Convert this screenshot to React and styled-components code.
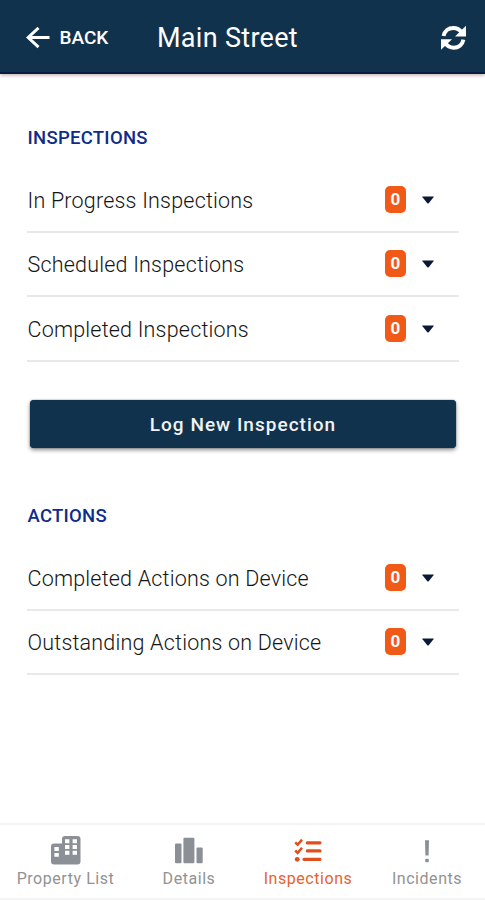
import styled, { createGlobalStyle } from "styled-components";

const inspections = [
  { label: "In Progress Inspections", count: 0 },
  { label: "Scheduled Inspections", count: 0 },
  { label: "Completed Inspections", count: 0 },
];

const actions = [
  { label: "Completed Actions on Device", count: 0 },
  { label: "Outstanding Actions on Device", count: 0 },
];

function List({ items }) {
  return (
    <Rows>
      {items.map((item) => (
        <Row key={item.label}>
          <RowLabel>{item.label}</RowLabel>
          <Badge>{item.count}</Badge>
          <Caret width="12" height="8" viewBox="0 0 12 8">
            <path d="M0.6 0.4H11.4Q12 0.6 11.5 1.3L6.7 7.2Q6 8 5.3 7.2L0.5 1.3Q0 0.6 0.6 0.4Z" />
          </Caret>
        </Row>
      ))}
    </Rows>
  );
}

export default function App() {
  return (
    <Page>
      <GlobalStyle />
      <Header>
        <BackButton>
          <svg width="24" height="22" viewBox="0 0 24 22" fill="none" stroke="#fff" strokeWidth="3">
            <path d="M23.5 10.5H2.5M12.5 0.9L2.2 10.5L12.5 20.1" />
          </svg>
          BACK
        </BackButton>
        <Title>Main Street</Title>
        <RefreshButton>
          <svg width="27" height="26" viewBox="0 0 27 26">
            <path d="M3.6 11C4.6 5.7 8.6 2.9 13.3 2.9C17 2.9 19.8 4.6 21.8 7.4" fill="none" stroke="#fff" strokeWidth="4" />
            <path d="M26 0.8V11.4H15Z" fill="#fff" />
            <path d="M23.4 14.6C22.4 19.9 18.4 22.7 13.7 22.7C10 22.7 7.2 21 5.2 18.2" fill="none" stroke="#fff" strokeWidth="4" />
            <path d="M1 24.8V14.2H12Z" fill="#fff" />
          </svg>
        </RefreshButton>
      </Header>

      <Content>
        <SectionTitle>INSPECTIONS</SectionTitle>
        <List items={inspections} />
        <LogButton>Log New Inspection</LogButton>
        <SectionTitle>ACTIONS</SectionTitle>
        <List items={actions} />
      </Content>

      <TabBar>
        <Tab $width="131px">
          <svg width="30" height="30" viewBox="0 0 30 30">
            <path d="M3 8.5H11V4Q11 1 14 1H26.5Q29.5 1 29.5 4V26.5Q29.5 29.5 26.5 29.5H3Q0 29.5 0 26.5V11.5Q0 8.5 3 8.5Z" fill="currentColor" />
            <path
              d="M3.4 12H7.8V16H3.4ZM3.4 18H7.8V21.8H3.4ZM14 4.2H18.4V8.2H14ZM21.6 4.2H26V8.2H21.6ZM14 10H18.4V14H14ZM21.6 10H26V14H21.6ZM14 15.7H18.4V19.7H14ZM21.6 15.7H26V19.7H21.6Z"
              fill="#fff"
            />
          </svg>
          <TabLabel>Property List</TabLabel>
        </Tab>
        <Tab $width="116px">
          <svg width="28" height="30" viewBox="0 0 28 30" fill="currentColor">
            <rect x="0" y="8.5" width="6.5" height="19.8" rx="1" />
            <rect x="8.4" y="2.7" width="11" height="25.6" rx="1" />
            <rect x="21.5" y="12.4" width="6.2" height="15.9" rx="1" />
          </svg>
          <TabLabel>Details</TabLabel>
        </Tab>
        <Tab $width="122px" $active>
          <svg width="28" height="30" viewBox="0 0 28 30" fill="none" stroke="currentColor">
            <path d="M13.3 7.8H26M13.3 15.9H26M10 24.3H26" strokeWidth="3.2" strokeLinecap="round" />
            <path d="M1.2 7.3L3.7 9.7L8 4.6M1.2 15.5L3.7 17.9L8 12.8" strokeWidth="2.5" />
            <circle cx="3.2" cy="24.3" r="2.4" fill="currentColor" stroke="none" />
          </svg>
          <TabLabel $active>Inspections</TabLabel>
        </Tab>
        <Tab $width="116px">
          <svg width="6" height="30" viewBox="0 0 6 30" fill="currentColor">
            <path d="M1 5.2H5L4.6 20.5H1.4Z" />
            <rect x="1.2" y="23.8" width="3.6" height="3.4" rx="1" />
          </svg>
          <TabLabel>Incidents</TabLabel>
        </Tab>
      </TabBar>
    </Page>
  );
}

const GlobalStyle = createGlobalStyle`
  * {
    box-sizing: border-box;
  }

  body {
    margin: 0;
    background-color: #fff;
    font-family: Roboto, "Liberation Sans", sans-serif;
  }

  button {
    border: none;
    padding: 0;
    background: none;
    color: inherit;
    font-family: inherit;
  }

  svg {
    display: block;
    flex-shrink: 0;
  }
`;

const Page = styled.div`
  display: flex;
  flex-direction: column;
  width: 485px;
  height: 900px;
  background-color: #fff;
`;

const Header = styled.header`
  display: flex;
  align-items: center;
  height: 74px;
  padding: 0 18px 0 26px;
  background-color: #11324d;
  border-bottom: 2px solid #071c42;
  box-shadow: 0 1px 4px rgba(60, 30, 20, 0.4);
  color: #fff;
`;

const BackButton = styled.button`
  display: flex;
  align-items: center;
  gap: 9.5px;
  width: 131px;
  padding-top: 3px;
  font-size: 19px;
  font-weight: 500;
  letter-spacing: 0;
`;

const Title = styled.h1`
  flex: 1;
  margin: 0;
  padding-top: 3px;
  font-size: 27px;
  font-weight: 400;
  letter-spacing: 0.3px;
`;

const RefreshButton = styled.button`
  padding-top: 3px;
`;

const Content = styled.main`
  flex: 1;
  padding: 52px 26px 0 27px;
`;

const SectionTitle = styled.h2`
  margin: 0;
  height: 24px;
  padding-left: 0.5px;
  line-height: 24px;
  color: #102c8a;
  font-size: 18.5px;
  font-weight: 500;
  letter-spacing: 0.28px;
`;

const Rows = styled.div`
  padding-top: 18px;
`;

const Row = styled.div`
  display: flex;
  align-items: center;
  height: 64.67px;
  border-bottom: 2px solid #e8e8e8;
`;

const RowLabel = styled.span`
  flex: 1;
  padding: 2px 0 0 0.5px;
  color: #151515;
  font-size: 21.5px;
  font-weight: 300;
  letter-spacing: 0.2px;
`;

const Badge = styled.span`
  width: 21px;
  height: 27px;
  margin-right: 16px;
  border-radius: 5px;
  background-color: #f15a16;
  color: #fff;
  font-size: 17px;
  font-weight: 700;
  line-height: 26px;
  text-align: center;
`;

const Caret = styled.svg`
  margin: 1px 25px 0 0;
  fill: #0b1938;
`;

const LogButton = styled.button`
  display: block;
  width: 426px;
  height: 48px;
  margin: 38px 0 56px 3px;
  padding-top: 1px;
  border-radius: 4px;
  background-color: #11324d;
  box-shadow: 0 2px 4px rgba(0, 0, 0, 0.45), 0 0 1px #071c42;
  color: #f1f3f5;
  font-size: 19px;
  font-weight: 500;
  letter-spacing: 1.02px;
`;

const TabBar = styled.nav`
  display: flex;
  height: 77px;
  border-top: 2px solid #f4f4f4;
  border-bottom: 2px solid #f4f4f4;
`;

const Tab = styled.button`
  display: flex;
  flex-direction: column;
  align-items: center;
  gap: 4px;
  width: ${(props) => props.$width};
  padding-top: 10px;
  color: ${(props) => (props.$active ? "#e04e1c" : "#8b9096")};
`;

const TabLabel = styled.span`
  color: ${(props) => (props.$active ? "#e8622f" : "#929292")};
  font-size: 16px;
  line-height: 20px;
  letter-spacing: 0.55px;
`;
